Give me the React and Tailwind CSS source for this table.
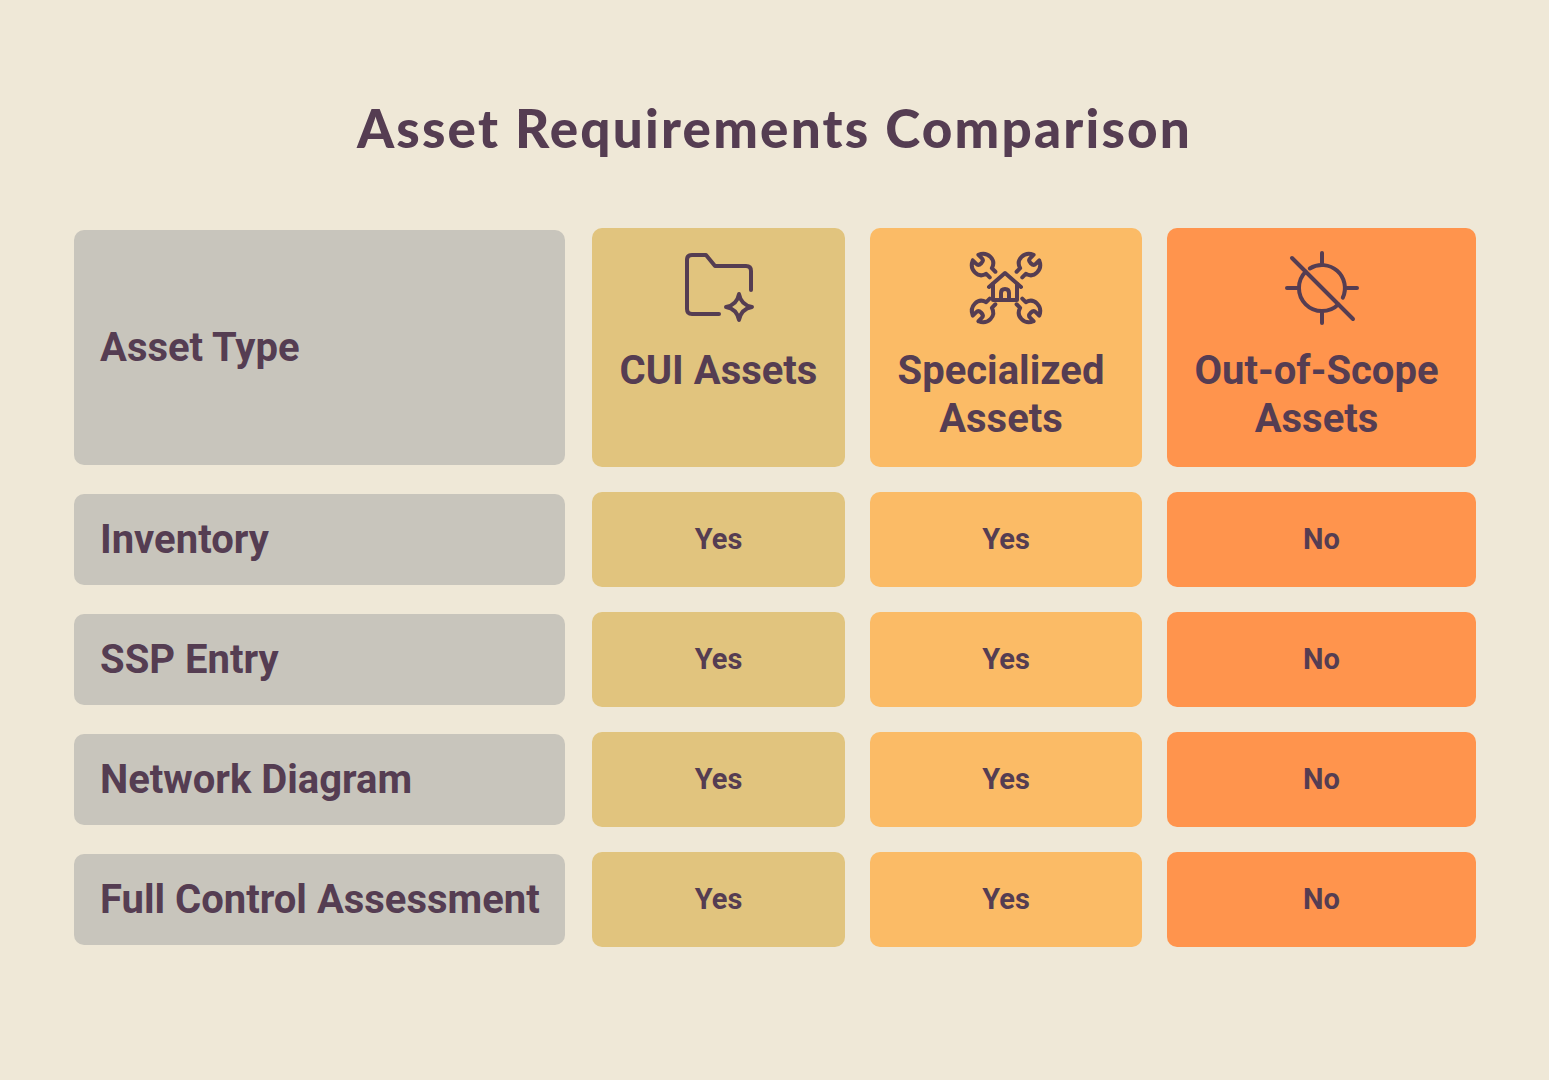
import React from 'react';

const ink = '#553d52';

const FolderSparkIcon = () => (
  <svg width="80" height="80" viewBox="0 0 80 80" fill="none" stroke={ink} strokeWidth="4" strokeLinecap="round" strokeLinejoin="round">
    <path d="M40 66 H13 Q8 66 8 61 V12 Q8 7 13 7 H27 L36 18 H67 Q72 18 72 23 V42" />
    <path d="M60 46 Q62 57 73 59 Q62 61 60 72 Q58 61 47 59 Q58 57 60 46 Z" />
  </svg>
);

// one wrench pointing up, rotated to each corner
const Wrench = ({ angle }) => (
  <g transform={`translate(40 40) rotate(${angle})`}>
    <path d="M-4 -43 V-38 Q-4 -35 0 -35 Q4 -35 4 -38 V-43 Q11 -40 11 -33 Q11 -26 4 -24 V-19 M-4 -19 V-24 Q-11 -26 -11 -33 Q-11 -40 -4 -43" />
  </g>
);

const HouseToolsIcon = () => (
  <svg width="80" height="80" viewBox="0 0 80 80" fill="none" stroke={ink} strokeWidth="4" strokeLinecap="round" strokeLinejoin="round">
    <Wrench angle={-45} />
    <Wrench angle={45} />
    <Wrench angle={135} />
    <Wrench angle={-135} />
    <path d="M23 39 L39 25 L55 39" />
    <path d="M27 36 V52 H51 V36" />
    <path d="M35 52 V45 Q35 41 39 41 Q43 41 43 45 V52" />
  </svg>
);

const TargetOffIcon = () => (
  <svg width="80" height="80" viewBox="0 0 80 80" fill="none" stroke={ink} strokeWidth="4" strokeLinecap="round" strokeLinejoin="round">
    <path d="M27.8 20.5 A23 23 0 0 1 60.8 49.7" />
    <path d="M56.3 56.3 A23 23 0 0 1 23.7 23.7" />
    <path d="M40 5 V15 M40 65 V75 M5 40 H15 M65 40 H75" />
    <path d="M10 10 L71 71" />
  </svg>
);

const columns = [
  { key: 'cui', title: 'CUI Assets', icon: <FolderSparkIcon />, bg: 'bg-[#e1c47e]', pad: '' },
  { key: 'spec', title: 'Specialized Assets', icon: <HouseToolsIcon />, bg: 'bg-[#fbbb66]', pad: 'pr-[10px]' },
  { key: 'oos', title: 'Out-of-Scope Assets', icon: <TargetOffIcon />, bg: 'bg-[#ff944d]', pad: 'pr-[10px]' },
];

const rows = [
  { label: 'Inventory', values: ['Yes', 'Yes', 'No'] },
  { label: 'SSP Entry', values: ['Yes', 'Yes', 'No'] },
  { label: 'Network Diagram', values: ['Yes', 'Yes', 'No'] },
  { label: 'Full Control Assessment', values: ['Yes', 'Yes', 'No'] },
];

export default function App() {
  return (
    <div className="min-h-[1080px] w-full bg-[#efe8d7] text-[#553d52] font-['Roboto',sans-serif]">
      <div className="pt-[90px] pb-[62px] text-center">
        <h1 className="text-[53px] leading-[76px] font-black tracking-[2.2px] font-['Lato','Open_Sans',sans-serif]">
          Asset Requirements Comparison
        </h1>
      </div>

      <div className="pl-[74px] grid grid-cols-[493px_253px_272px_309px] grid-rows-[239px_95px_95px_95px_95px] gap-x-[25px] gap-y-[25px]">
        {/* Header row */}
        <div className="mr-[2px] my-[2px] rounded-[10px] bg-[#c8c5bc] flex items-center px-[26px]">
          <span className="text-[40px] leading-[48px] font-bold">Asset Type</span>
        </div>
        {columns.map((col) => (
          <div key={col.key} className={`${col.bg} rounded-[10px] flex flex-col items-center pt-[20px]`}>
            {col.icon}
            <div className={`mt-[19px] text-center text-[40px] leading-[48px] font-bold ${col.pad}`}>
              {col.title}
            </div>
          </div>
        ))}

        {/* Body rows */}
        {rows.map((row) => (
          <React.Fragment key={row.label}>
            <div className="mr-[2px] my-[2px] rounded-[10px] bg-[#c8c5bc] flex items-center px-[26px]">
              <span className="text-[40px] leading-[48px] font-bold whitespace-nowrap">{row.label}</span>
            </div>
            {row.values.map((v, i) => (
              <div key={i} className={`${columns[i].bg} rounded-[10px] flex items-center justify-center`}>
                <span className="text-[29px] font-bold">{v}</span>
              </div>
            ))}
          </React.Fragment>
        ))}
      </div>
    </div>
  );
}
